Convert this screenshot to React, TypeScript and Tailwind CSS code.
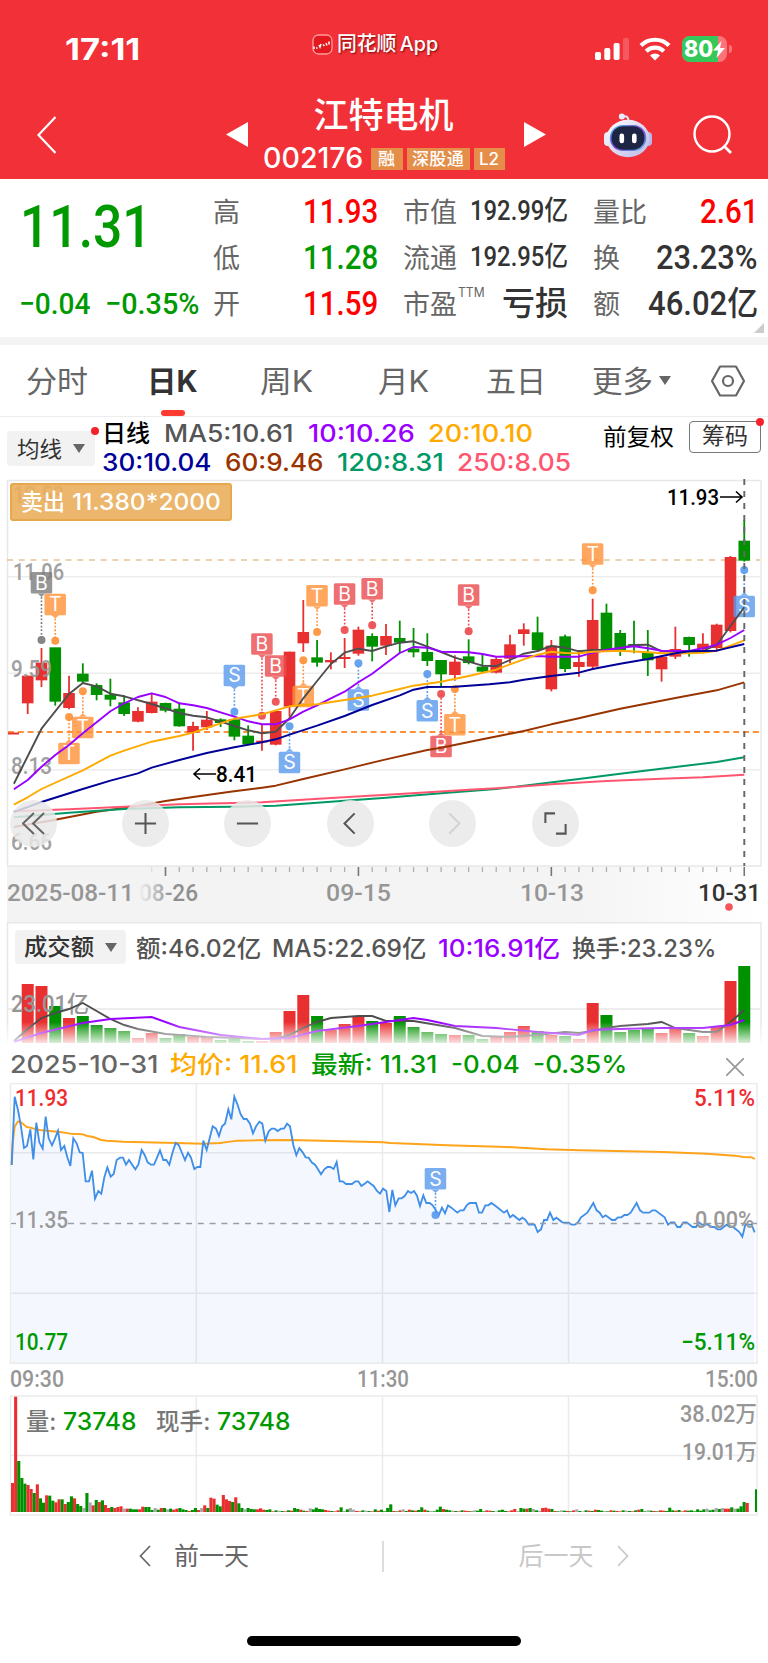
import { useLayoutEffect, useRef, useState } from "react";
import type { ReactNode } from "react";
import clsx from "clsx";

const SANS = "font-['Inter','Noto_Sans_CJK_SC',sans-serif]";
const DIN = "font-['Roboto','Noto_Sans_CJK_SC',sans-serif]";

const RED = "#e93030";
const GREEN = "#009100";
const GRAY = "#a8a8a8";

// Squeezes or stretches one line of text to a fixed column width
function Fit({ w, className, children }: { w: number; className?: string; children: ReactNode }) {
  const ref = useRef<HTMLSpanElement>(null);
  const [scale, setScale] = useState(1);

  useLayoutEffect(() => {
    if (ref.current) setScale(w / ref.current.offsetWidth);
  }, [w]);

  return (
    <span className={clsx("inline-block shrink-0 whitespace-nowrap", className)} style={{ width: w }}>
      <span ref={ref} className="inline-block origin-left" style={{ transform: `scaleX(${scale})` }}>
        {children}
      </span>
    </span>
  );
}

/* ---------- K line data ---------- */

// [direction, high, body top, body bottom, low] in chart units
type Candle = [string, number, number, number, number];

const CANDLES: Candle[] = [
  ["r", 617, 617, 700, 732], ["r", 534, 578, 631, 651], ["g", 534, 532, 695, 707], ["r", 617, 669, 714, 718],
  ["g", 580, 611, 635, 641], ["g", 640, 645, 675, 691], ["g", 626, 674, 689, 709], ["g", 676, 697, 732, 738],
  ["r", 712, 723, 755, 757], ["r", 670, 695, 729, 730], ["g", 698, 699, 722, 727], ["g", 700, 716, 769, 770],
  ["r", 755, 768, 787, 842], ["r", 723, 749, 772, 780], ["g", 745, 748, 759, 771], ["g", 745, 748, 800, 811],
  ["g", 766, 797, 824, 826], ["r", 765, 812, 817, 842], ["r", 723, 723, 824, 826], ["r", 545, 545, 710, 740],
  ["r", 390, 486, 520, 546], ["g", 510, 562, 578, 590], ["r", 547, 570, 577, 598], ["r", 504, 561, 567, 594],
  ["r", 470, 479, 551, 557], ["g", 490, 498, 530, 574], ["r", 462, 498, 527, 555], ["g", 452, 504, 518, 549],
  ["g", 474, 536, 547, 562], ["g", 490, 546, 573, 588], ["g", 570, 570, 613, 650], ["r", 556, 575, 615, 632],
  ["g", 508, 559, 579, 583], ["g", 550, 590, 605, 607], ["r", 562, 567, 608, 610], ["r", 494, 523, 566, 580],
  ["r", 460, 478, 492, 527], ["g", 440, 487, 540, 545], ["r", 510, 527, 658, 664], ["g", 494, 499, 597, 606],
  ["r", 540, 576, 591, 620], ["r", 386, 450, 590, 600], ["g", 401, 428, 537, 540], ["g", 480, 489, 540, 558],
  ["g", 452, 522, 528, 550], ["g", 480, 546, 571, 618], ["r", 556, 560, 598, 635], ["r", 470, 537, 560, 567],
  ["g", 500, 501, 525, 560], ["r", 490, 521, 537, 540], ["r", 461, 464, 534, 545], ["r", 258, 261, 483, 487],
  ["g", 150, 212, 272, 275],
];

type Point = [number, number];

const MA_LINES: { color: string; points: Point[] }[] = [
  { color: "#993300", points: [[-1, 1071], [2, 1049], [5, 1025], [8, 1008], [10, 993], [12, 981], [14.7, 965], [17, 953], [18, 947], [20, 927], [23, 898], [26, 868], [29, 840], [30, 833], [33, 808], [35, 791], [36, 783], [38, 763], [40, 745], [41, 735], [43, 716], [47, 684], [50, 661], [52, 637]] },
  { color: "#009966", points: [[-1, 1042], [3, 1028], [7, 1017], [11, 1012], [15, 1010], [18, 1007], [22, 995], [26, 983], [30, 970], [34, 957], [36, 947], [40, 927], [43, 911], [47, 891], [50, 876], [52, 862]] },
  { color: "#ff5570", points: [[-1, 1024], [3, 1018], [7, 1010], [11, 1003], [17, 997], [22, 984], [27, 972], [32, 959], [34, 955], [38, 943], [42, 933], [46, 926], [49, 922], [52, 914]] },
  { color: "#4d4d4d", points: [[-1, 941], [1, 776], [3, 672], [4, 639], [5, 649], [6, 671], [7, 679], [9, 702], [11, 729], [12, 737], [13, 742], [14, 755], [15, 768], [16, 781], [17, 790], [18, 785], [19, 745], [20, 685], [21, 633], [22, 582], [23, 548], [24, 536], [25, 543], [26, 529], [27, 518], [28, 514], [29, 530], [30, 546], [31, 563], [32, 575], [33, 587], [34, 588], [35, 570], [36, 551], [37, 543], [38, 528], [39, 533], [40, 544], [41, 540], [42, 539], [43, 534], [44, 525], [45, 524], [46, 544], [47, 545], [49, 543], [50, 525], [51, 468], [52, 412]] },
  { color: "#9900ff", points: [[-1, 958], [0, 930], [1, 890], [2, 855], [3, 825], [4, 790], [5, 757], [6, 724], [7, 700], [8, 681], [9, 670], [10, 681], [11, 700], [12, 706], [13, 714], [14, 727], [15, 740], [16, 754], [17, 763], [18, 763], [19, 748], [20, 725], [21, 706], [22, 685], [23, 665], [24, 637], [25, 611], [26, 580], [27, 549], [28, 531], [29, 533], [30, 545], [31, 546], [32, 547], [33, 552], [34, 560], [37, 558], [38, 560], [40, 560], [41, 548], [42, 540], [43, 534], [44, 529], [45, 535], [46, 542], [48, 543], [49, 535], [50, 524], [51, 504], [52, 480]] },
  { color: "#ffaa00", points: [[-1, 1004], [0, 982], [1, 957], [4, 901], [6, 857], [7, 842], [9, 815], [11, 798], [12, 788], [13, 774], [14, 760], [15, 746], [17, 733], [19, 709], [20, 705], [21, 703], [23, 690], [25, 677], [27, 657], [28, 647], [30, 635], [32, 618], [34, 599], [35, 583], [36, 568], [37, 554], [38, 545], [39, 549], [40, 550], [41, 545], [43, 542], [45, 547], [46, 550], [48, 550], [49, 548], [50, 542], [51, 527], [52, 511]] },
  { color: "#000099", points: [[-1, 1026], [1, 996], [4, 957], [6, 932], [8, 910], [9, 893], [11, 870], [13, 849], [15, 832], [17, 817], [18, 808], [19, 794], [21, 767], [23, 738], [25, 705], [27, 676], [28, 659], [29, 651], [31, 650], [33.5, 643], [35, 637], [36, 629], [38, 618], [40, 608], [41, 597], [43, 581], [45, 567], [47, 550], [48, 544], [50, 542], [52, 522]] },
];

// trade markers: [letter, candle, badge top, dot y]
const MARKERS: [string, number, number, number][] = [
  ["X", 1, 306, 510], ["T", 2, 371, 512], ["T", 3, 818, 741], ["T", 4, 740, 664], ["S", 15, 584, 725],
  ["B", 17, 490, 737], ["B", 18, 556, 695], ["S", 19, 845, 769], ["T", 20, 647, 571], ["T", 21, 345, 486],
  ["B", 23, 340, 480], ["S", 24, 658, 580], ["B", 25, 324, 466], ["S", 29, 690, 612], ["B", 30, 797, 672],
  ["T", 31, 732, 657], ["B", 32, 343, 484], ["T", 41, 220, 361], ["S", 52, 377, 300],
];

const MARKER_COLORS: Record<string, string> = { B: "#ec4b4e", T: "#ff9138", S: "#5a9bee", X: "#7c7c7c" };

const cx = (i: number) => 27.7 + i * 13.78;
const ky = (v: number) => 470 + v / 3;
const path = (pts: Point[], fy: (v: number) => number) => pts.map(([i, v]) => `${cx(i).toFixed(1)},${fy(v).toFixed(1)}`).join(" ");

/* ---------- turnover data ---------- */

const TURNOVER = [
  984, 986, 1006, 1018, 1016, 1025, 1028, 1031, 1038, 1033, 1038, 1034, 1037, 1037, 1040, 1039, 1041, 1041, 1032, 1011,
  995, 1016, 1030, 1024, 1016, 1021, 1023, 1016, 1027, 1032, 1034, 1035, 1035, 1039, 1037, 1032, 1026, 1031, 1035, 1036,
  1039, 1003, 1015, 1032, 1030, 1029, 1033, 1027, 1033, 1036, 1026, 981, 966,
];

const TURNOVER_MA5: Point[] = [[-1, 1041], [0, 1029], [1, 1018], [2, 1013], [3, 1009], [4, 1003], [5, 1011], [6, 1019], [7, 1025], [8, 1029], [10, 1034], [13, 1037], [17, 1039], [18, 1039], [19, 1035], [20, 1028], [21, 1022], [22, 1018], [24, 1016], [25, 1016], [26, 1021], [28, 1021], [31, 1028], [33, 1036], [35, 1037], [37, 1035], [39, 1032], [40, 1033], [41, 1031], [42, 1028], [43, 1026], [45, 1024], [46, 1022], [47, 1028], [49, 1032], [50, 1032], [51, 1022], [52, 1010]];
const TURNOVER_MA10: Point[] = [[-1, 1042], [1, 1033], [4, 1023], [6, 1019], [9, 1017], [11, 1027], [14, 1035], [17, 1039], [19, 1038], [21, 1031], [24, 1026], [27, 1020], [28, 1018], [29, 1020], [31, 1026], [34, 1028], [37, 1032], [40, 1035], [41, 1030], [43, 1029], [46, 1028], [49, 1028], [51, 1025], [52, 1020]];

/* ---------- intraday data ---------- */

const PRICE =
  "35,285 44,80 54,120 63,170 72,234 81,228 91,178 100,268 109,158 118,217 128,236 137,140 146,205 156,226 165,205 174,182 183,240 193,228 202,262 211,288 220,205 230,220 239,247 248,249 257,334 267,334 276,302 285,386 295,363 304,371 313,322 322,292 332,320 341,312 350,270 360,263 369,263 378,284 387,270 397,285 406,298 415,284 425,240 434,255 443,277 453,284 462,284 471,263 480,241 490,270 499,270 508,284 518,246 527,219 536,225 545,246 555,270 564,248 573,263 583,297 592,291 601,291 610,212 620,240 629,205 638,169 648,176 657,198 666,169 675,161 685,118 694,148 703,80 713,105 722,133 731,147 740,147 750,161 759,190 768,169 778,155 787,161 796,212 806,184 815,176 824,176 833,183 843,176 852,176 861,161 870,169 880,225 889,256 898,234 908,247 917,262 926,263 935,277 945,284 954,298 963,313 973,298 982,291 991,291 1001,297 1010,276 1019,334 1028,334 1038,342 1056,342 1066,334 1075,334 1084,348 1094,341 1103,334 1112,341 1121,348 1131,363 1140,371 1149,356 1159,363 1168,426 1177,360 1186,406 1196,385 1205,385 1214,378 1224,363 1233,369 1242,363 1251,377 1260,408 1270,376 1279,399 1289,399 1298,406 1307,420 1316,436 1326,413 1335,430 1344,406 1354,413 1372,428 1381,421 1391,421 1400,406 1409,399 1428,399 1437,428 1446,428 1456,406 1465,406 1474,399 1484,406 1512,428 1521,421 1530,442 1539,435 1558,450 1567,443 1576,449 1586,464 1604,464 1613,486 1623,478 1632,450 1641,450 1650,428 1660,450 1669,443 1687,457 1706,458 1715,464 1725,464 1734,457 1743,442 1762,428 1780,399 1790,421 1799,428 1808,442 1817,436 1836,450 1845,450 1854,442 1864,442 1873,435 1882,435 1892,428 1910,399 1920,421 1929,428 1948,428 1957,421 1966,421 1994,442 2004,464 2013,457 2023,457 2032,471 2041,471 2050,457 2060,457 2078,471 2088,471 2097,457 2106,464 2125,464 2134,471 2143,471 2153,478 2162,478 2171,471 2180,464 2190,471 2199,471 2208,478 2218,486 2227,500 2236,464 2255,464 2264,487";
const AVERAGE =
  "35,285 38,220 44,170 54,154 63,157 80,171 90,173 118,180 180,186 211,191 248,193 262,198 280,201 304,210 320,212 370,215 527,219 610,221 660,219 690,215 713,212 770,211 870,210 1000,213 1150,217 1170,219 1230,221 1340,226 1520,231 1640,238 1740,241 1990,246 2120,251 2205,257 2230,261 2255,262 2265,267";

// opening minutes: colour + bar height
const OPENING =
  "r87 r346 g153 g102 g85 r81 r69 g57 r83 g41 g28 r50 g49 g34 r29 r38 g38 r24 g30 g47 r41 g24 g18 n12 g57 n29 r20 g36 r30 g35 r21 r12 g15 r12 r15 r17 n10 r10 g10 g8 g8 r8 r16 g15 g15 g6 n12 g7 r12 g12 n8 g10 r7 r10 g12 g8 g6 r3 g6 g12 r6 n12 r20 g12 r43 r40 g22 g17 r51 r38 r33 g30 r44 g26 g12 n8 g12 g9 g8 r8 r11 r7 g6 g8".split(" ");
const SPIKES: Record<number, string> = {
  91: "g12", 92: "g9", 93: "r7", 96: "n11", 97: "g8", 98: "g13", 99: "g9", 100: "g8", 101: "r6", 106: "g14", 108: "g8", 109: "n12", 110: "n7",
  117: "g8", 119: "g7", 121: "g12", 122: "g23", 126: "n8", 128: "r7", 131: "g6", 132: "g14", 133: "r7", 137: "g7", 138: "g16", 139: "r9", 140: "g7",
  151: "g9", 158: "g7", 162: "r9", 164: "g12", 165: "g10", 166: "r10", 167: "g12", 168: "n9", 171: "r12", 172: "r13", 173: "r10", 174: "g9",
  182: "n8", 188: "r7", 189: "g6", 202: "r7", 203: "g9", 212: "g13", 215: "g6", 219: "g5", 221: "g8", 223: "g8", 224: "n10", 226: "g7",
  227: "n12", 228: "g9", 229: "n12", 230: "r10", 231: "r10", 232: "g14", 233: "n10", 234: "g10", 235: "g17", 236: "g30", 237: "r27", 238: "n0", 239: "n0", 240: "g68",
};
const MINUTES = Array.from({ length: 241 }, (_, i) => OPENING[i] ?? SPIKES[i] ?? "rgrnggr"[(i * 5) % 7] + (2 + ((i * 11) % 4)));

const FILL: Record<string, string> = { r: RED, g: GREEN, n: GRAY };

/* ---------- small pieces ---------- */

function Marker({ kind, x, top, dot }: { kind: string; x: number; top: number; dot: number }) {
  const color = MARKER_COLORS[kind];
  const above = top < dot;
  const edge = above ? top + 21.4 : top;
  const tip = above ? edge + 3.5 : edge - 3.5;
  return (
    <g>
      <line x1={x} x2={x} y1={tip} y2={dot} stroke={color} strokeWidth="1.6" strokeDasharray="1.8 1.8" />
      <circle cx={x} cy={dot} r="4" fill={color} opacity=".92" />
      <g opacity=".8">
        <rect x={x - 10.8} y={top} width="21.5" height="21.5" rx="1.5" fill={color} />
        <path d={`M${x - 4} ${edge} L${x} ${tip} L${x + 4} ${edge} Z`} fill={color} />
      </g>
      <text x={x} y={top + 17.8} textAnchor="middle" fontSize="19.5" fill="#fff" className={SANS}>
        {kind === "X" ? "B" : kind}
      </text>
    </g>
  );
}

type LabelProps = { x: number; y: number; w: number; size?: number; fill?: string; weight?: number; children: string };

function Label({ x, y, w, size = 23, fill = "#969696", weight = 500, children }: LabelProps) {
  return (
    <text x={x} y={y} textLength={w} lengthAdjust="spacingAndGlyphs" fontSize={size} fontWeight={weight} fill={fill} className={DIN}>
      {children}
    </text>
  );
}

function Caret({ className }: { className?: string }) {
  return (
    <svg viewBox="0 0 12 9" className={clsx("h-[9px] w-3 shrink-0", className)}>
      <path d="M0 0H12L6 9Z" fill="#666" />
    </svg>
  );
}

/* ---------- header ---------- */

function StatusBar() {
  return (
    <div className="flex h-[50px] items-center">
      <Fit w={75} className="ml-[65px] text-[30px] leading-none font-bold">17:11</Fit>
      <div className="mb-[10px] ml-[172px] flex items-center">
        <svg viewBox="0 0 21 21" className="h-[21px] w-[21px]">
          <rect x="1" y="1" width="19" height="19" rx="5.5" fill="#e3191f" stroke="#ff9b9d" strokeWidth="1.3" />
          <path d="M2 12.5v2.5M4 14h1.5M7 11l1 2 1-3M11 10.5l1.5 1.5M14 9l1 2.5M17 7.5v3" stroke="#fff" strokeWidth="1.5" fill="none" />
        </svg>
        <Fit w={101} className="ml-[4px] text-[20px] leading-none font-medium [text-shadow:1px_1px_2px_rgba(90,0,0,.8)] [word-spacing:-2px]">
          同花顺 App
        </Fit>
      </div>
      <svg viewBox="0 0 34 22" className="ml-[157px] h-[22px] w-[34px]">
        <rect x="0" y="14" width="6" height="8" rx="1.8" fill="#fff" />
        <rect x="9.3" y="10" width="6" height="12" rx="1.8" fill="#fff" />
        <rect x="18.6" y="5" width="6" height="17" rx="1.8" fill="#fff" />
        <rect x="28" y="0" width="6" height="22" rx="1.8" fill="#fff" opacity=".2" />
      </svg>
      <svg viewBox="0 0 32 24" className="ml-[10px] h-6 w-8">
        <path d="M2 8.5C9.500 0.800 22.500 0.800 30 8.500" stroke="#fff" strokeWidth="4.200" fill="none" />
        <path d="M7.200 14.300C12 9.300 20 9.300 24.800 14.300" stroke="#fff" strokeWidth="4.200" fill="none" />
        <path d="M11 18.400C13.700 15.700 18.300 15.700 21 18.400L16 23.600Z" fill="#fff" />
      </svg>
      <div className="relative ml-[11px] flex h-[26px] w-[45px] items-center overflow-hidden rounded-[8px] bg-[#f9757a]">
        <div className="absolute inset-y-0 left-0 w-[36px] bg-[#34c759]" />
        <Fit w={29} className="relative ml-[2px] text-[23px] leading-none font-extrabold">80</Fit>
        <svg viewBox="0 0 12 17" className="relative h-[17px] w-3">
          <path d="M8.500 0L0 9.500H5L3.500 17L12 7H7Z" fill="#fff" />
        </svg>
      </div>
      <div className="ml-[2px] h-2 w-[3px] rounded-r-full bg-[#f9757a]" />
    </div>
  );
}

function Robot() {
  return (
    <svg viewBox="0 0 48 46" className="ml-[58px] h-[46px] w-12">
      <defs>
        <linearGradient id="shell" x1="0" y1="0" x2="1" y2="1">
          <stop offset="0" stopColor="#ffffff" />
          <stop offset="1" stopColor="#b9b8e6" />
        </linearGradient>
        <linearGradient id="visor" x1="0" y1="0" x2="1" y2="1">
          <stop offset="0" stopColor="#43c8e8" />
          <stop offset=".5" stopColor="#8440d8" />
          <stop offset="1" stopColor="#4cb8e0" />
        </linearGradient>
      </defs>
      <path d="M18.500 4.500C22.500 3.500 24.500 5 24.500 9" stroke="#dfe6f8" strokeWidth="2" fill="none" />
      <circle cx="17.800" cy="4.500" r="3" fill="#e6ecfb" />
      <rect x="0" y="20" width="8" height="14" rx="4" fill="#e9ecfa" />
      <rect x="40" y="20" width="8" height="14" rx="4" fill="#b9b8ea" />
      <ellipse cx="24" cy="26.500" rx="21.500" ry="18.800" fill="url(#shell)" />
      <rect x="5.800" y="13" width="36.500" height="26" rx="13" fill="url(#visor)" />
      <rect x="7.500" y="14.200" width="33" height="23.500" rx="11.500" fill="#1d2444" />
      <rect x="15.500" y="21.500" width="4.600" height="9.800" rx="2.200" fill="#fff" />
      <rect x="28" y="21.500" width="4.600" height="9.800" rx="2.200" fill="#fff" />
    </svg>
  );
}

function Header() {
  return (
    <header className="h-[179px] bg-[#f23037] pt-6 text-white">
      <StatusBar />
      <div className="mt-[16px] flex h-[89px] items-center">
        <svg viewBox="0 0 20 38" className="ml-[37px] h-[38px] w-5">
          <path d="M18.500 1L1.500 19L18.500 37" stroke="#fff" strokeWidth="2.200" fill="none" />
        </svg>
        <svg viewBox="0 0 22 25" className="ml-[169px] h-[25px] w-[22px]">
          <path d="M22 0V25L0 12.500Z" fill="#fff" />
        </svg>
        <div className="flex h-full w-[276px] flex-col items-center pt-[5px] pr-[5px]">
          <div className="text-[35px] leading-[40px] font-medium">江特电机</div>
          <div className="mt-[11px] flex h-[26px] items-center">
            <Fit w={100} className="mr-[8px] -mt-[2px] text-[28px] leading-none font-medium">002176</Fit>
            <div className="flex gap-1 text-[17px] leading-[22px] font-medium">
              <span className="h-[22px] w-8 bg-[#e48e4a] text-center">融</span>
              <span className="h-[22px] w-[63px] bg-[#e48e4a] text-center tracking-[.3px]">深股通</span>
              <span className="h-[22px] w-[31px] bg-[#e48e4a] text-center">L2</span>
            </div>
          </div>
        </div>
        <svg viewBox="0 0 22 25" className="h-[25px] w-[22px]">
          <path d="M0 0V25L22 12.500Z" fill="#fff" />
        </svg>
        <Robot />
        <svg viewBox="0 0 40 40" className="ml-[41px] h-10 w-10">
          <circle cx="19" cy="19" r="17.500" stroke="#fff" strokeWidth="2.400" fill="none" />
          <path d="M31 31L38 38" stroke="#fff" strokeWidth="2.800" />
        </svg>
      </div>
    </header>
  );
}

/* ---------- quote ---------- */

function Stat({ label, sup, value, w, className }: { label: string; sup?: string; value: string; w: number; className: string }) {
  return (
    <div className="flex h-[46px] items-center justify-between">
      <span className="mt-[3px] flex text-[27px] leading-none text-[#666]">
        {label}
        {sup && <Fit w={27} className="ml-[1px] -mt-[5px] text-[13px] leading-none">{sup}</Fit>}
      </span>
      <Fit w={w} className={clsx("leading-none", DIN, className)}>{value}</Fit>
    </div>
  );
}

function Quote() {
  return (
    <section className="relative flex h-[158px] pt-[9px]">
      <div className="w-[213px] shrink-0 text-[#009900]">
        <Fit w={132} className={clsx("ml-[20px] h-[78px] text-[59px] leading-[78px] font-medium", DIN)}>11.31</Fit>
        <div className={clsx("ml-[19px] mt-[14px] flex h-[46px] items-center text-[30px] font-medium", DIN)}>
          <Fit w={71}>−0.04</Fit>
          <Fit w={94} className="ml-[15px]">−0.35%</Fit>
        </div>
      </div>
      <div className="w-[165px] shrink-0">
        <Stat label="高" value="11.93" w={75} className="text-[33px] font-medium text-[#ff0000]" />
        <Stat label="低" value="11.28" w={75} className="text-[33px] font-medium text-[#009900]" />
        <Stat label="开" value="11.59" w={75} className="text-[33px] font-medium text-[#ff0000]" />
      </div>
      <div className="ml-[25px] w-[165px] shrink-0">
        <Stat label="市值" value="192.99亿" w={98} className="text-[27px] font-medium text-[#333]" />
        <Stat label="流通" value="192.95亿" w={98} className="text-[27px] font-medium text-[#333]" />
        <Stat label="市盈" sup="TTM" value="亏损" w={66} className="text-[33px] font-medium text-[#333]" />
      </div>
      <div className="ml-[25px] w-[165px] shrink-0">
        <Stat label="量比" value="2.61" w={58} className="text-[33px] font-medium text-[#ff0000]" />
        <Stat label="换" value="23.23%" w={102} className="text-[33px] font-medium text-[#333]" />
        <Stat label="额" value="46.02亿" w={110} className="text-[33px] font-medium text-[#333]" />
      </div>
      <svg viewBox="0 0 10 10" className="absolute right-1 bottom-1 h-[10px] w-[10px]">
        <path d="M10 0V10H0Z" fill="#ccc" />
      </svg>
    </section>
  );
}

/* ---------- tabs and MA legend ---------- */

function Tabs() {
  return (
    <nav className="flex h-[72px] items-center border-b border-[#ececec] text-[30px] leading-none text-[#666]">
      <Fit w={62} className="ml-[26px]">分时</Fit>
      <div className="relative ml-[59px] flex h-full items-center font-bold text-[#333]">
        <Fit w={51}>日K</Fit>
        <div className="absolute bottom-0 left-[14px] h-[6px] w-6 rounded-full bg-[#ff3b30]" />
      </div>
      <Fit w={53} className="ml-[62px]">周K</Fit>
      <Fit w={51} className="ml-[65px]">月K</Fit>
      <Fit w={60} className="ml-[57px]">五日</Fit>
      <Fit w={61} className="ml-[46px]">更多</Fit>
      <Caret className="ml-[6px]" />
      <svg viewBox="0 0 34 32" className="ml-[40px] h-8 w-[34px]">
        <path d="M9 1.500H25L33 16L25 30.500H9L1 16Z" stroke="#666" strokeWidth="2.200" fill="none" strokeLinejoin="round" />
        <circle cx="17" cy="16" r="5" stroke="#666" strokeWidth="2.200" fill="none" />
      </svg>
    </nav>
  );
}

function MaLegend() {
  return (
    <div className="flex h-[61px] text-[24px] leading-[28px]">
      <div className="relative mt-[14px] ml-[7px] flex h-[35px] w-[88px] shrink-0 items-center rounded-[4px] bg-[#f2f2f2] pl-[10px] text-[22px] text-[#333]">
        <Fit w={45}>均线</Fit>
        <Caret className="ml-[11px]" />
        <div className="absolute -top-[4px] left-[84px] h-2 w-2 rounded-full bg-[#f5222d]" />
      </div>
      <div className="ml-[7px] w-[470px] shrink-0 pt-[2px] font-medium">
        <div className="flex h-[30px] items-center">
          <Fit w={48} className="text-black">日线</Fit>
          <Fit w={130} className="ml-[14px] text-[#555]">MA5:10.61</Fit>
          <Fit w={107} className="ml-[14px] text-[#9900ff]">10:10.26</Fit>
          <Fit w={105} className="ml-[13px] text-[#ffaa00]">20:10.10</Fit>
        </div>
        <div className="-mt-[1px] flex h-[29px] items-center">
          <Fit w={110} className="text-[#000099]">30:10.04</Fit>
          <Fit w={99} className="ml-[13px] text-[#993300]">60:9.46</Fit>
          <Fit w={107} className="ml-[13px] text-[#009966]">120:8.31</Fit>
          <Fit w={114} className="ml-[13px] text-[#ff5570]">250:8.05</Fit>
        </div>
      </div>
      <Fit w={71} className="mt-[6px] ml-[31px] text-[23px] text-black">前复权</Fit>
      <div className="relative mt-[4px] ml-[15px] h-[32px] w-[72px] rounded-[4px] border-[1.5px] border-[#777] text-center text-[23px] leading-[28px] text-[#333]">
        筹码
        <div className="absolute -top-[4px] -right-[4px] h-2 w-2 rounded-full bg-[#f5222d]" />
      </div>
    </div>
  );
}

/* ---------- K line ---------- */

const MINOR_TICKS = Array.from({ length: 44 }, (_, i) => i + 9);

const TOOL_ICONS = [
  { name: "first", d: "M13 1L1 12.500L13 24M24 1L12 12.500L24 24", gap: "", color: "#666" },
  { name: "zoom-in", d: "M12.500 1V24M1 12.500H24", gap: "ml-[65px]", color: "#555" },
  { name: "zoom-out", d: "M1 12.500H24", gap: "ml-[55px]", color: "#555" },
  { name: "prev", d: "M17 1.500L6 12.500L17 23.500", gap: "ml-[56px]", color: "#555" },
  { name: "next", d: "M9 1.500L20 12.500L9 23.500", gap: "ml-[55px]", color: "#d2d2d2" },
  { name: "fullscreen", d: "M12 1.500H1.500V12M13 23.500H23.500V13", gap: "ml-[56px]", color: "#555" },
];

function KLine() {
  return (
    <div className="relative h-[444px]">
      <svg viewBox="0 478 768 444" className="block h-[444px] w-[768px]">
        <defs>
          <linearGradient id="axisFade" x1="0" x2="1" y1="0" y2="0">
            <stop offset="0" stopColor="#f3f3f3" />
            <stop offset=".75" stopColor="#f4f4f4" />
            <stop offset="1" stopColor="#ffffff" />
          </linearGradient>
          <linearGradient id="dateFade" x1="138" x2="172" y1="0" y2="0" gradientUnits="userSpaceOnUse">
            <stop offset="0" stopColor="#8f8f8f" stopOpacity="0" />
            <stop offset="1" stopColor="#8f8f8f" />
          </linearGradient>
        </defs>
        <rect x="7" y="866" width="755" height="56" fill="url(#axisFade)" />
        <rect x="7.500" y="480.500" width="753.500" height="385.500" fill="#fff" stroke="#e8e8e8" strokeWidth="1.500" />
        {[576.7, 673.3, 769.7].map((y) => (
          <line key={y} x1="8" x2="760" y1={y} y2={y} stroke="#ededed" strokeWidth="1.500" />
        ))}
        <line x1="7" x2="760" y1="560" y2="560" stroke="#e5c391" strokeWidth="1.500" strokeDasharray="6 5.700" />
        <line x1="8" x2="760" y1="732" y2="732" stroke="#ff9138" strokeWidth="2" strokeDasharray="6 3.800" />
        <line x1="8" x2="19" y1="733.500" y2="733.500" stroke={RED} strokeWidth="2" />

        {CANDLES.map(([dir, high, top, bottom, low], i) => (
          <g key={i} fill={FILL[dir]} stroke={FILL[dir]}>
            <line x1={cx(i)} x2={cx(i)} y1={ky(high)} y2={ky(low)} strokeWidth="1.800" />
            <rect x={cx(i) - 5.8} y={ky(top)} width="11.600" height={(bottom - top) / 3} stroke="none" />
          </g>
        ))}
        <g opacity=".9">
          <Label x={13} y={503} w={51}>12.53</Label>
          <Label x={13} y={580} w={51}>11.06</Label>
          <Label x={11} y={677} w={41}>9.59</Label>
          <Label x={11} y={773.5} w={41}>8.13</Label>
          <Label x={11} y={850} w={41}>6.66</Label>
        </g>
        {MARKERS.map(([kind, i, top, dot]) => (
          <Marker key={i} kind={kind} x={cx(i)} top={ky(top)} dot={ky(dot)} />
        ))}
        {MA_LINES.map((line) => (
          <polyline key={line.color} points={path(line.points, ky)} fill="none" stroke={line.color} strokeWidth="1.900" strokeLinejoin="round" />
        ))}

        <path d="M194 774H216M200 768.500L194 774L200 779.500" stroke="#000" strokeWidth="1.600" fill="none" />
        <Label x={216} y={782} w={41} size={22.5} fill="#000">8.41</Label>
        <Label x={667} y={505} w={52} size={22.5} fill="#000">11.93</Label>
        <path d="M720 497H742M736 491.500L742 497L736 502.500" stroke="#000" strokeWidth="1.600" fill="none" />
        <line x1="744.300" x2="744.300" y1="479" y2="866" stroke="#666" strokeWidth="1.900" strokeDasharray="6 6" />

        {MINOR_TICKS.map((i) => {
          const major = (i - 10) % 14 === 0;
          return (
            <line key={i} x1={cx(i)} x2={cx(i)} y1="867" y2={major ? 876 : 872} stroke={major ? "#777" : i === 9 ? "#ddd" : "#b0b0b0"} strokeWidth={major ? 1.6 : 1.3} />
          );
        })}
        <Label x={7} y={901} w={127}>2025-08-11</Label>
        <Label x={139} y={901} w={59} fill="url(#dateFade)">08-26</Label>
        <Label x={326} y={901} w={65}>09-15</Label>
        <Label x={520} y={901} w={64}>10-13</Label>
        <Label x={698} y={901} w={63} fill="#333">10-31</Label>
        <circle cx="729" cy="907" r="3.800" fill="#f5555a" />
      </svg>

      <div className="absolute top-[5px] left-[10px] flex h-[38px] w-[222px] items-center rounded-[3px] border-2 border-[#e5a84d] bg-[#eaae5c]/90 pl-[9px] text-[23px] leading-none font-medium text-white [font-feature-settings:'calt'_0]">
        <Fit w={44}>卖出</Fit>
        <Fit w={149} className="ml-[7px]">11.380*2000</Fit>
      </div>

      <div className="absolute top-[322px] left-[10px] flex">
        {TOOL_ICONS.map((icon) => (
          <button key={icon.name} className={clsx("flex h-[47px] w-[47px] items-center justify-center rounded-full bg-[#e9e9e9]/85", icon.gap)}>
            <svg viewBox="0 0 25 25" className="h-[23px] w-[23px]">
              <path d={icon.d} stroke={icon.color} strokeWidth="2.200" fill="none" />
            </svg>
          </button>
        ))}
      </div>
    </div>
  );
}

/* ---------- turnover ---------- */

function Turnover() {
  return (
    <div className="relative h-[121px]">
      <svg viewBox="0 922 768 121" className="block h-[121px] w-[768px]">
        <defs>
          <linearGradient id="bottomFade" x1="0" x2="0" y1="0" y2="1">
            <stop offset="0" stopColor="#fff" stopOpacity="0" />
            <stop offset="1" stopColor="#fff" stopOpacity=".85" />
          </linearGradient>
        </defs>
        <path d="M7.500 1043V922.700H761V1043M8 1009H760" fill="none" stroke="#e8e8e8" strokeWidth="1.500" />
        {TURNOVER.map((top, i) => (
          <rect key={i} x={cx(i) - 6} y={top} width="12" height={1043 - top} fill={FILL[CANDLES[i][0]]} />
        ))}
        <Label x={11} y={1012} w={78}>23.01亿</Label>
        <polyline points={path(TURNOVER_MA5, (v) => v)} fill="none" stroke="#4d4d4d" strokeWidth="1.900" />
        <polyline points={path(TURNOVER_MA10, (v) => v)} fill="none" stroke="#9900ff" strokeWidth="1.900" />
        <rect x="0" y="1022" width="768" height="21" fill="url(#bottomFade)" />
      </svg>
      <div className="absolute top-2 left-[15px] flex h-[34px] items-center text-[24px] leading-none font-medium text-[#555]">
        <div className="flex h-[34px] w-[111px] items-center rounded-[4px] bg-[#f2f2f2] pl-[9px] text-[23px] text-[#333]">
          <Fit w={70}>成交额</Fit>
          <Caret className="ml-[11px]" />
        </div>
        <div className="mt-[3px] ml-[10px] flex">
          <Fit w={125}>额:46.02亿</Fit>
          <Fit w={154} className="ml-[11px]">MA5:22.69亿</Fit>
          <Fit w={122} className="ml-[12px] text-[#9900ff]">10:16.91亿</Fit>
          <Fit w={145} className="ml-[12px]">换手:23.23%</Fit>
        </div>
      </div>
    </div>
  );
}

/* ---------- intraday panel ---------- */

function Intraday() {
  return (
    <section>
      <div className="flex h-[40px] items-center pt-[3px] text-[24px] leading-none font-medium text-[#009900]">
        <Fit w={148} className="ml-[10px] text-[#666]">2025-10-31</Fit>
        <Fit w={127} className="ml-[12px] text-[#ffaa00]">均价: 11.61</Fit>
        <Fit w={126} className="ml-[14px]">最新: 11.31</Fit>
        <Fit w={69} className="ml-[14px]">-0.04</Fit>
        <Fit w={94} className="ml-[13px]">-0.35%</Fit>
        <svg viewBox="0 0 18 18" className="mt-[5px] ml-[99px] h-[18px] w-[18px]">
          <path d="M0 0L18 18M18 0L0 18" stroke="#999" strokeWidth="1.700" />
        </svg>
      </div>

      <svg viewBox="0 1083 768 312" className="block h-[312px] w-[768px]">
        <path d="M10.500 1083.500H757V1363.300H10.500ZM10 1152.700H757M10 1293.300H757M196.300 1083V1363M382.500 1083V1363M568.500 1083V1363" fill="none" stroke="#ebebeb" strokeWidth="1.500" />
        <g transform="translate(0 1070) scale(.33333)">
          <polygon points={`${PRICE} 2264,878 35,878`} fill="#3c8cf0" fillOpacity=".06" />
          <polyline points={AVERAGE} fill="none" stroke="#ffa31a" strokeWidth="5.800" strokeLinejoin="round" />
          <polyline points={PRICE} fill="none" stroke="#3f8ee8" strokeWidth="5.500" />
        </g>
        <path d="M68 1223.500H757" stroke="#999da6" strokeWidth="1.300" strokeDasharray="6 5.800" />
        <path d="M11 1223.500H16" stroke="#999da6" strokeWidth="1.300" />
        <Label x={15} y={1105.5} w={53} fill="#ee2c30">11.93</Label>
        <Label x={15} y={1227.5} w={53} fill="#999">11.35</Label>
        <Label x={15} y={1349.5} w={53} fill="#009900">10.77</Label>
        <Label x={694} y={1105.5} w={61} fill="#ee2c30">5.11%</Label>
        <Label x={695} y={1227.5} w={59} fill="#999">0.00%</Label>
        <Label x={681} y={1349.5} w={74} fill="#009900">−5.11%</Label>
        <Label x={10} y={1387} w={54}>09:30</Label>
        <Label x={357} y={1387} w={52}>11:30</Label>
        <Label x={705} y={1387} w={53}>15:00</Label>
        <Marker kind="S" x={435.5} top={1168} dot={1215} />
      </svg>

      <div className="relative">
        <svg viewBox="0 1395 768 121" className="block h-[121px] w-[768px]">
          <path d="M10.500 1396H757V1515H10.500ZM10 1455.500H757M196.300 1396V1515M382.500 1396V1515M568.500 1396V1515" fill="none" stroke="#ebebeb" strokeWidth="1.500" />
          {MINUTES.map((bar, i) => {
            const h = Number(bar.slice(1)) / 3;
            return <rect key={i} x={11 + i * 3.1} y={1512 - h} width={i === 240 ? 2 : 3.1} height={h} fill={FILL[bar[0]]} />;
          })}
          <Label x={680} y={1421.5} w={77}>38.02万</Label>
          <Label x={682} y={1460} w={75}>19.01万</Label>
        </svg>
        <div className="absolute top-[14px] left-[26px] flex h-[26px] items-center text-[24px] leading-none font-medium text-[#009900]">
          <Fit w={30} className="text-[#777]">量:</Fit>
          <Fit w={74} className="ml-[7px]">73748</Fit>
          <Fit w={54} className="ml-[19px] text-[#777]">现手:</Fit>
          <Fit w={74} className="ml-[7px]">73748</Fit>
        </div>
      </div>
    </section>
  );
}

function DayNav() {
  return (
    <div className="mt-[20px] flex h-[40px] items-center text-[25px] leading-none">
      <button className="flex w-[382px] items-center pl-[139px] text-[#666]">
        <svg viewBox="0 0 12 22" className="h-[22px] w-3">
          <path d="M11 1L1.500 11L11 21" stroke="#666" strokeWidth="1.700" fill="none" />
        </svg>
        <Fit w={75} className="ml-[23px]">前一天</Fit>
      </button>
      <div className="h-[31px] w-[1.500px] bg-[#ddd]" />
      <button className="flex items-center pl-[135px] text-[#c8c8c8]">
        <Fit w={75}>后一天</Fit>
        <svg viewBox="0 0 12 22" className="ml-[23px] h-[22px] w-3">
          <path d="M1 1L10.500 11L1 21" stroke="#c8c8c8" strokeWidth="1.700" fill="none" />
        </svg>
      </button>
    </div>
  );
}

export default function App() {
  return (
    <div className={clsx("h-[1663px] w-[768px] overflow-hidden bg-white", SANS)}>
      <Header />
      <Quote />
      <div className="h-2 bg-[#f4f4f4]" />
      <Tabs />
      <MaLegend />
      <KLine />
      <Turnover />
      <Intraday />
      <DayNav />
      <div className="mx-auto mt-[60px] h-[10px] w-[274px] rounded-full bg-black" />
    </div>
  );
}
